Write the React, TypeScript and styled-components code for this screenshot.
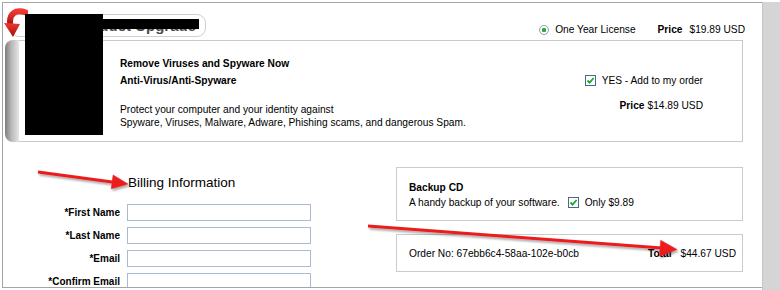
import styled, { createGlobalStyle } from "styled-components";

const GlobalStyle = createGlobalStyle`
  body {
    margin: 0;
    font-family: "Liberation Sans", Arial, sans-serif;
    font-size: 10.2px;
    color: #000;
    background: #fff;
  }
`;

const Frame = styled.div`
  position: relative;
  width: 780px;
  height: 290px;
  display: flex;
  align-items: flex-start;
  padding: 2px 0 0 2px;
  box-sizing: border-box;
  overflow: hidden;
`;

const Page = styled.div`
  width: 760px;
  height: 286px;
  flex-shrink: 0;
  box-sizing: border-box;
  border: 1px solid #a4a4a4;
  border-right: none;
  overflow: hidden;
`;

const ScrollStrip = styled.div`
  flex: 1;
  align-self: stretch;
  background: #d5d5d5;
  border-left: 1px solid #c4c4c4;
`;

const Header = styled.div`
  position: relative;
  height: 37px;
  display: flex;
  align-items: flex-start;
  padding-right: 17px;
`;

const Pill = styled.div`
  margin: 11px 0 0 7px;
  width: 196px;
  height: 23px;
  box-sizing: border-box;
  border: 1px solid #cfcfcf;
  border-radius: 9px;
  display: flex;
  align-items: center;
  justify-content: flex-end;
  padding-right: 9px;
  font-size: 15px;
  font-weight: bold;
  color: #4a4a4a;
`;

const CurvedArrow = styled.svg`
  position: absolute;
  left: 1px;
  top: 4px;
`;

const LicenseGroup = styled.div`
  margin: 20px 0 0 auto;
  display: flex;
  align-items: center;
  line-height: 13px;
`;

const Radio = styled.span`
  width: 10px;
  height: 10px;
  box-sizing: border-box;
  border-radius: 50%;
  border: 1px solid #8aa2bd;
  background: radial-gradient(circle, #2fa83a 0 2px, #fff 2.5px);
  margin-right: 6px;
`;

const PriceLabel = styled.span<{ $gap?: number; $after?: number }>`
  font-weight: bold;
  margin-left: ${(p) => p.$gap ?? 0}px;
  margin-right: ${(p) => p.$after ?? 7}px;
`;

const MainBox = styled.div`
  margin-left: 2px;
  width: 738px;
  height: 102px;
  display: flex;
`;

const SideStrip = styled.div`
  width: 14px;
  border-radius: 8px 0 0 8px;
  background: linear-gradient(to right, #7e7e7e, #b8b8b8 45%, #e6e6e6);
`;

const BoxBody = styled.div`
  flex: 1;
  display: flex;
  border: 1px solid #c9c9c9;
  border-left: none;
  padding: 16px 39px 0 101px;
  line-height: 13px;
`;

const Offer = styled.div`
  display: flex;
  flex-direction: column;
`;

const Strong = styled.div<{ $mt?: number }>`
  font-weight: bold;
  margin-top: ${(p) => p.$mt ?? 0}px;
`;

const Para = styled.p`
  margin: 16px 0 0;
`;

const AddColumn = styled.div`
  margin: 17px 0 0 auto;
  display: flex;
  flex-direction: column;
  align-items: flex-end;
  gap: 12px;
`;

const CheckRow = styled.div`
  display: flex;
  align-items: center;
`;

const Check = styled.span<{ $gap?: number }>`
  width: 11px;
  height: 11px;
  box-sizing: border-box;
  border: 1px solid #46698c;
  background: #fff;
  display: inline-flex;
  align-items: center;
  justify-content: center;
  margin: 0 6px 0 ${(p) => p.$gap ?? 0}px;
`;

const Lower = styled.div`
  display: flex;
  align-items: flex-start;
`;

const Billing = styled.div`
  width: 393px;
  padding-top: 33px;
  display: flex;
  flex-direction: column;
  gap: 6px;
`;

const BillingTitle = styled.div`
  margin: 0 0 7px 125px;
  font-size: 13.5px;
  line-height: 16px;
`;

const FieldRow = styled.div`
  display: flex;
  align-items: center;
  gap: 7px;
`;

const FieldLabel = styled.label`
  width: 117px;
  text-align: right;
  font-weight: bold;
  font-size: 10px;
`;

const Input = styled.input`
  width: 184px;
  height: 17px;
  box-sizing: border-box;
  border: 1px solid #a8bbd2;
  padding: 0 3px;
  font: inherit;
`;

const Side = styled.div`
  width: 347px;
  padding-top: 25px;
  display: flex;
  flex-direction: column;
  gap: 13px;
`;

const Card = styled.div<{ $h: number }>`
  height: ${(p) => p.$h}px;
  box-sizing: border-box;
  border: 1px solid #cbcbcb;
`;

const BackupBody = styled.div`
  padding: 12px 0 0 12px;
  line-height: 15px;
`;

const OrderBody = styled.div`
  height: 100%;
  display: flex;
  align-items: center;
  padding: 0 6px 0 12px;
`;

const Total = styled.span`
  margin-left: auto;
  font-weight: bold;
  margin-right: 9px;
`;

const Redact = styled.div<{ $x: number; $y: number; $w: number; $h: number }>`
  position: absolute;
  left: ${(p) => p.$x}px;
  top: ${(p) => p.$y}px;
  width: ${(p) => p.$w}px;
  height: ${(p) => p.$h}px;
  background: #000;
`;

const Annotations = styled.svg`
  position: absolute;
  left: 0;
  top: 0;
  pointer-events: none;
`;

function Tick() {
  return (
    <svg width="9" height="9" viewBox="0 0 9 9">
      <path d="M1.5 4.5 L3.6 6.6 L7.6 2" fill="none" stroke="#22a62a" strokeWidth="1.8" />
    </svg>
  );
}

function head(tx: number, ty: number, fx: number, fy: number, len: number, w: number) {
  const dx = tx - fx;
  const dy = ty - fy;
  const d = Math.hypot(dx, dy);
  const ux = dx / d;
  const uy = dy / d;
  const bx = tx - ux * len;
  const by = ty - uy * len;
  return `${tx},${ty} ${bx - uy * w},${by + ux * w} ${bx + uy * w},${by - ux * w}`;
}

export default function App() {
  return (
    <>
      <GlobalStyle />
      <Frame>
        <Page>
          <Header>
            <Pill>Product Upgrade</Pill>
            <CurvedArrow width="24" height="32" viewBox="0 0 24 32">
              <defs>
                <linearGradient id="ca" x1="0" y1="0" x2="0" y2="1">
                  <stop offset="0" stopColor="#ee3b30" />
                  <stop offset="1" stopColor="#a30c0c" />
                </linearGradient>
              </defs>
              <path d="M22 5.5 C12 2 4 6 6.5 19" fill="none" stroke="url(#ca)" strokeWidth="6" strokeLinecap="round" />
              <polygon points="0,16 16,17 9,30" fill="url(#ca)" />
            </CurvedArrow>
            <LicenseGroup>
              <Radio />
              <span>One Year License</span>
              <PriceLabel $gap={22}>Price</PriceLabel>
              <span>$19.89 USD</span>
            </LicenseGroup>
          </Header>

          <MainBox>
            <SideStrip />
            <BoxBody>
              <Offer>
                <Strong>Remove Viruses and Spyware Now</Strong>
                <Strong $mt={4}>Anti-Virus/Anti-Spyware</Strong>
                <Para>
                  Protect your computer and your identity against
                  <br />
                  Spyware, Viruses, Malware, Adware, Phishing scams, and dangerous Spam.
                </Para>
              </Offer>
              <AddColumn>
                <CheckRow>
                  <Check>
                    <Tick />
                  </Check>
                  YES - Add to my order
                </CheckRow>
                <CheckRow>
                  <PriceLabel $after={3}>Price</PriceLabel>$14.89 USD
                </CheckRow>
              </AddColumn>
            </BoxBody>
          </MainBox>

          <Lower>
            <Billing>
              <BillingTitle>Billing Information</BillingTitle>
              {["*First Name", "*Last Name", "*Email", "*Confirm Email"].map((l) => (
                <FieldRow key={l}>
                  <FieldLabel>{l}</FieldLabel>
                  <Input />
                </FieldRow>
              ))}
            </Billing>
            <Side>
              <Card $h={54}>
                <BackupBody>
                  <Strong>Backup CD</Strong>
                  <CheckRow>
                    A handy backup of your software.
                    <Check $gap={8}>
                      <Tick />
                    </Check>
                    Only $9.89
                  </CheckRow>
                </BackupBody>
              </Card>
              <Card $h={38}>
                <OrderBody>
                  <span>Order No: 67ebb6c4-58aa-102e-b0cb</span>
                  <Total>Total</Total>
                  <span>$44.67 USD</span>
                </OrderBody>
              </Card>
            </Side>
          </Lower>
        </Page>
        <ScrollStrip />

        <Redact $x={25} $y={14} $w={78} $h={121} />
        <Redact $x={103} $y={19} $w={96} $h={10} />

        <Annotations width="780" height="290">
          <defs>
            <filter id="sh" x="-10%" y="-50%" width="120%" height="200%">
              <feDropShadow dx="1.5" dy="2" stdDeviation="1.2" floodColor="#000" floodOpacity="0.35" />
            </filter>
          </defs>
          <g filter="url(#sh)" fill="#ec1c1c" stroke="#ec1c1c">
            <line x1="38" y1="172" x2="116" y2="182.5" strokeWidth="3" />
            <polygon points={head(128, 184, 38, 172, 16, 7)} strokeWidth="0.5" />
            <line x1="368" y1="226" x2="662" y2="248" strokeWidth="3" />
            <polygon points={head(677, 249.5, 368, 226, 17, 8)} strokeWidth="0.5" />
          </g>
        </Annotations>
      </Frame>
    </>
  );
}
